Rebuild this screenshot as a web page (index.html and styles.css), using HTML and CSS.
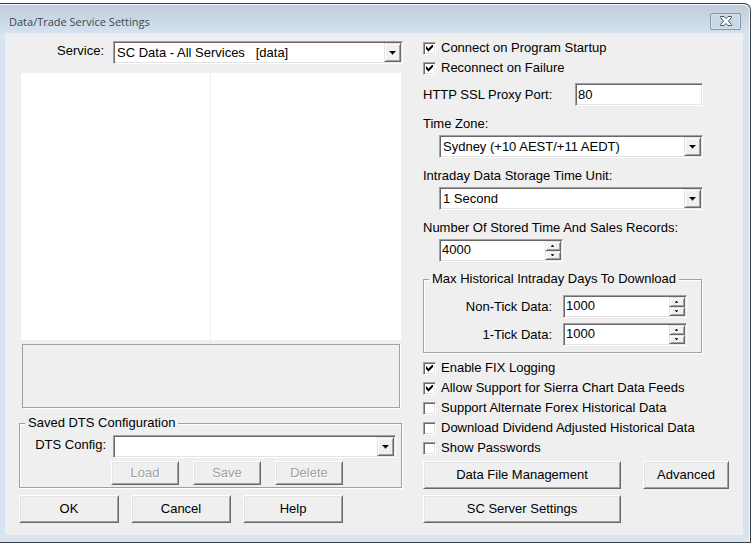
FILE: index.html
```html
<!DOCTYPE html>
<html lang="en">
<head>
<meta charset="utf-8">
<title>Data/Trade Service Settings</title>
<link rel="stylesheet" href="styles.css">
</head>
<body>
<main class="window">
  <header class="titlebar">
    <h1 class="title">Data/Trade Service Settings</h1>
    <button class="close" type="button" aria-label="Close">
      <svg width="12" height="10" viewBox="0 0 12 10" aria-hidden="true">
        <path d="M.5.5h3.500L6 2.500 8 .500h3.500v1L8.500 5l3 3.500v1H8L6 7.500 4 9.500H.500v-1L3.500 5l-3-3.500z" fill="#f6f8fa" stroke="#4b545f" stroke-width="1" stroke-linejoin="round"/>
      </svg>
    </button>
  </header>

  <form class="client">
    <section class="left">
      <div class="service-row">
        <label class="field-label" for="service">Service:</label>
        <span class="combo">
          <select id="service"><option>SC Data - All Services&nbsp;&nbsp; [data]</option></select>
          <span class="arrow"></span>
        </span>
      </div>

      <div class="properties">
        <div class="properties-names"></div>
        <div class="properties-values"></div>
      </div>
      <div class="description"></div>

      <fieldset class="group config">
        <legend>Saved DTS Configuration</legend>
        <div class="config-row">
          <label class="field-label" for="dts">DTS Config:</label>
          <span class="combo">
            <select id="dts"><option></option></select>
            <span class="arrow"></span>
          </span>
        </div>
        <div class="config-buttons">
          <button class="btn small" type="button" disabled>Load</button>
          <button class="btn small" type="button" disabled>Save</button>
          <button class="btn small" type="button" disabled>Delete</button>
        </div>
      </fieldset>

      <div class="dialog-buttons">
        <button class="btn" type="button">OK</button>
        <button class="btn" type="button">Cancel</button>
        <button class="btn" type="button">Help</button>
      </div>
    </section>

    <section class="right">
      <div class="checks">
        <label class="check"><input type="checkbox" checked>Connect on Program Startup</label>
        <label class="check"><input type="checkbox" checked>Reconnect on Failure</label>
      </div>

      <div class="port-row">
        <label for="port">HTTP SSL Proxy Port:</label>
        <input class="edit" id="port" type="text" value="80">
      </div>

      <div class="field">
        <label for="zone">Time Zone:</label>
        <span class="combo">
          <select id="zone"><option>Sydney (+10 AEST/+11 AEDT)</option></select>
          <span class="arrow"></span>
        </span>
      </div>

      <div class="field">
        <label for="unit">Intraday Data Storage Time Unit:</label>
        <span class="combo">
          <select id="unit"><option>1 Second</option></select>
          <span class="arrow"></span>
        </span>
      </div>

      <div class="field">
        <label for="records">Number Of Stored Time And Sales Records:</label>
        <span class="spin">
          <input id="records" type="text" value="4000">
          <span class="spin-buttons">
            <button class="up" type="button" aria-label="Increase"></button>
            <button class="down" type="button" aria-label="Decrease"></button>
          </span>
        </span>
      </div>

      <fieldset class="group days">
        <legend>Max Historical Intraday Days To Download</legend>
        <div class="days-row">
          <label for="nontick">Non-Tick Data:</label>
          <span class="spin">
            <input id="nontick" type="text" value="1000">
            <span class="spin-buttons">
              <button class="up" type="button" aria-label="Increase"></button>
              <button class="down" type="button" aria-label="Decrease"></button>
            </span>
          </span>
        </div>
        <div class="days-row">
          <label for="onetick">1-Tick Data:</label>
          <span class="spin">
            <input id="onetick" type="text" value="1000">
            <span class="spin-buttons">
              <button class="up" type="button" aria-label="Increase"></button>
              <button class="down" type="button" aria-label="Decrease"></button>
            </span>
          </span>
        </div>
      </fieldset>

      <div class="checks options">
        <label class="check"><input type="checkbox" checked>Enable FIX Logging</label>
        <label class="check"><input type="checkbox" checked>Allow Support for Sierra Chart Data Feeds</label>
        <label class="check"><input type="checkbox">Support Alternate Forex Historical Data</label>
        <label class="check"><input type="checkbox">Download Dividend Adjusted Historical Data</label>
        <label class="check"><input type="checkbox">Show Passwords</label>
      </div>

      <div class="more-buttons">
        <button class="btn wide" type="button">Data File Management</button>
        <button class="btn advanced" type="button">Advanced</button>
        <button class="btn wide" type="button">SC Server Settings</button>
      </div>
    </section>
  </form>
</main>
</body>
</html>
```

FILE: styles.css
```css
* {
  box-sizing: border-box;
}

body {
  margin: 0;
  padding: 3px 3px 2px 0;
  background: #fff;
}

body,
button,
input,
select {
  font-family: "Liberation Sans", Arial, sans-serif;
  font-size: 13px;
  line-height: 18px;
  color: #000;
}

.window {
  padding: 0 7px 7px 5px;
  border: solid #3f4043;
  border-width: 1px 1px 1px 0;
  border-radius: 0 7px 0 0;
  box-shadow: inset -1px 1px #eef4fa;
  background: linear-gradient(#bfcddb, #d7e4f2 32px);
}

.titlebar {
  display: flex;
  justify-content: space-between;
  align-items: center;
  height: 29px;
  padding: 6px 2px 0 4px;
}

.title {
  margin: 0;
  font: 11px/18px "Open Sans", "Noto Sans", sans-serif;
  color: #3f4750;
}

.close {
  display: flex;
  align-items: center;
  justify-content: center;
  width: 31px;
  height: 17px;
  padding: 0 0 1px 1px;
  border: 1px solid #8496ab;
  border-radius: 2px;
  background: #c9d7e6;
  box-shadow: inset 0 0 0 1px #d9e4ef;
}

.client {
  display: grid;
  grid-template-columns: 384fr 306fr;
  column-gap: 20px;
  padding: 5px 14px 12px;
  background: #efefef;
}

.left,
.right {
  display: flex;
  flex-direction: column;
  min-width: 0;
}

/* Sunken controls */
.combo,
.spin,
.edit {
  height: 23px;
  border: 1px solid;
  border-color: #a0a0a0 #fff #fff #a0a0a0;
  background: #fff;
  box-shadow: inset 1px 1px #696969, inset -1px -1px #e3e3e3;
}

.combo {
  display: grid;
  grid-template-columns: 1fr 17px;
  padding: 1px;
}

.combo select {
  grid-area: 1 / 1 / 2 / 3;
  min-width: 0;
  height: 19px;
  padding: 1px 18px 0 2px;
  border: 0;
  background: transparent;
  appearance: none;
  outline: 0;
}

.arrow {
  grid-area: 1 / 2;
  display: grid;
  place-content: center;
  pointer-events: none;
}

.arrow,
.spin-buttons button {
  border: 1px solid;
  border-color: #e3e3e3 #696969 #696969 #e3e3e3;
  background: #f0f0f0;
  box-shadow: inset 1px 1px #fff, inset -1px -1px #a0a0a0;
}

.arrow::before {
  content: "";
  width: 7px;
  height: 4px;
  background: #000;
  clip-path: polygon(0 0, 7px 0, 7px 1px, 6px 1px, 6px 2px, 5px 2px, 5px 3px, 4px 3px, 4px 4px, 3px 4px, 3px 3px, 2px 3px, 2px 2px, 1px 2px, 1px 1px, 0 1px);
}

.edit {
  min-width: 0;
  padding: 0 2px 1px;
  outline: 0;
}

.spin {
  display: flex;
  width: 124px;
  padding: 1px;
}

.spin input {
  flex: 1;
  min-width: 0;
  height: 18px;
  padding: 0 1px;
  border: 0;
  background: transparent;
  outline: 0;
}

.spin-buttons {
  display: grid;
  grid-template-rows: 1fr 1fr;
  width: 16px;
}

.spin-buttons button {
  display: grid;
  place-items: center;
  min-height: 0;
  padding: 0 1px 0 0;
}

.spin-buttons button::before {
  content: "";
  width: 3px;
  height: 2px;
  background: #000;
  clip-path: polygon(0 2px, 0 1px, 1px 1px, 1px 0, 2px 0, 2px 1px, 3px 1px, 3px 2px);
}

.spin-buttons .down::before {
  clip-path: polygon(0 0, 3px 0, 3px 1px, 2px 1px, 2px 2px, 1px 2px, 1px 1px, 0 1px);
}

/* Raised buttons */
.btn {
  width: 100px;
  height: 28px;
  padding: 0 0 1px;
  border: 1px solid;
  border-color: #fff #696969 #696969 #fff;
  background: #efefef;
  box-shadow: inset 1px 1px #e3e3e3, inset -1px -1px #a0a0a0;
}

.btn.small {
  width: 68px;
  height: 24px;
}

.btn:disabled {
  color: #a0a0a0;
  text-shadow: 1px 1px #fff;
}

/* Etched groups */
.group {
  min-width: 0;
  margin: 0;
  border: 1px solid #a0a0a0;
  box-shadow: 1px 1px #fff, inset 1px 1px #fff;
}

.group legend {
  padding: 0 3px;
  background: #efefef;
  line-height: 16px;
}

/* Left side */
.service-row,
.config-row {
  display: grid;
  grid-template-columns: 94px 1fr;
}

.service-row {
  margin: 3px 0 9px;
}

.field-label {
  padding-right: 9px;
  line-height: 20px;
  text-align: right;
}

.properties {
  display: grid;
  grid-template-columns: 1fr 1fr;
  height: 267px;
  margin: 0 2px 4px;
  background: #fff;
}

.properties-names {
  border-right: 1px solid #efefef;
}

.description {
  height: 64px;
  margin: 0 3px 7px;
  border: 1px solid #a0a0a0;
  box-shadow: 1px 1px #fff;
}

.config {
  margin: 0 1px 7px 0;
  padding: 4px 5px 2px;
}

.config-row {
  grid-template-columns: 88px 1fr;
}

.config-row .field-label {
  padding-right: 7px;
}

.config-buttons {
  display: flex;
  gap: 14px;
  margin-top: 3px;
  padding-left: 86px;
}

.dialog-buttons {
  display: flex;
  gap: 12px;
}

/* Right side */
.check {
  display: flex;
  align-items: center;
  gap: 5px;
  height: 20px;
  white-space: nowrap;
}

.check input {
  display: grid;
  place-content: center;
  width: 13px;
  height: 13px;
  margin: 0;
  border: 1px solid;
  border-color: #a0a0a0 #fff #fff #a0a0a0;
  background: #fff;
  box-shadow: inset 1px 1px #696969, inset -1px -1px #e3e3e3;
  appearance: none;
}

.check input:checked::before {
  content: "";
  width: 7px;
  height: 7px;
  background: #000;
  clip-path: polygon(0 2px, 1px 2px, 1px 3px, 2px 3px, 2px 4px, 3px 4px, 3px 3px, 4px 3px, 4px 2px, 5px 2px, 5px 1px, 6px 1px, 6px 0, 7px 0, 7px 3px, 6px 3px, 6px 4px, 5px 4px, 5px 5px, 4px 5px, 4px 6px, 3px 6px, 3px 7px, 2px 7px, 2px 6px, 1px 6px, 1px 5px, 0 5px);
}

.port-row {
  display: grid;
  grid-template-columns: 152px 1fr;
  margin: 5px 26px 0 0;
}

.port-row label,
.days-row label {
  padding-top: 3px;
}

.field {
  display: grid;
  row-gap: 2px;
  margin: 9px 26px 0 0;
}

.field .combo,
.field .spin {
  margin-left: 16px;
}

.days {
  display: grid;
  row-gap: 5px;
  margin: 9px 27px 5px 0;
  padding: 8px 14px 6px 5px;
}

.days-row {
  display: grid;
  grid-template-columns: 1fr 124px;
  column-gap: 11px;
  text-align: right;
}

.more-buttons {
  display: grid;
  grid-template-columns: 198px 86px;
  justify-content: space-between;
  row-gap: 6px;
  margin-top: 3px;
}

.more-buttons .btn {
  width: auto;
}
```
